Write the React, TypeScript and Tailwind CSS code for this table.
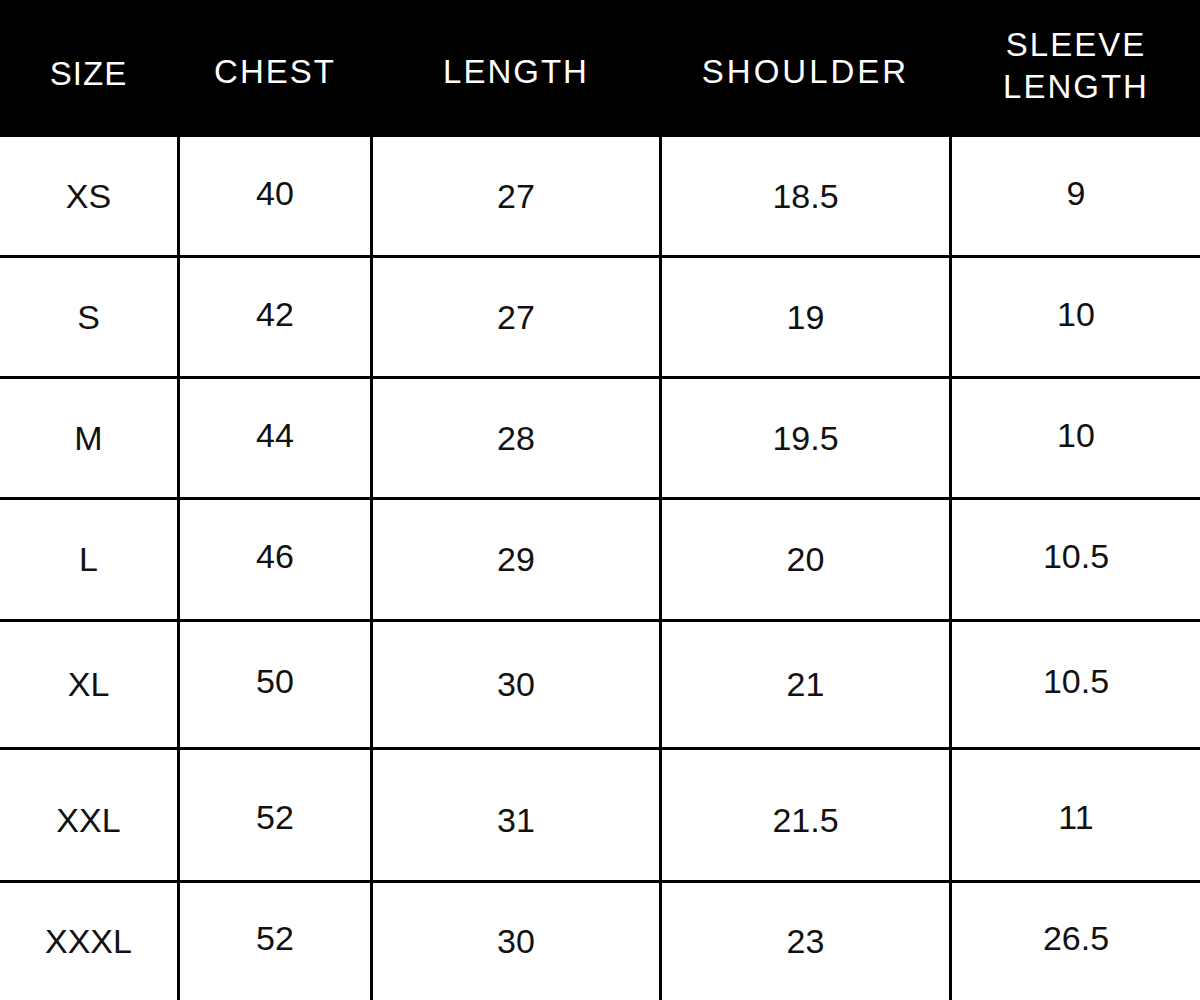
import React from "react";

const rows: string[][] = [
  ["XS", "40", "27", "18.5", "9"],
  ["S", "42", "27", "19", "10"],
  ["M", "44", "28", "19.5", "10"],
  ["L", "46", "29", "20", "10.5"],
  ["XL", "50", "30", "21", "10.5"],
  ["XXL", "52", "31", "21.5", "11"],
  ["XXXL", "52", "30", "23", "26.5"],
];

export default function App() {
  return (
    <div
      className="w-[1200px] h-[1000px] overflow-hidden bg-black grid grid-cols-[177px_190px_286px_287px_248px] grid-rows-[134px_118px_118px_118px_119px_125px_130px_117px] gap-[3px]"
      style={{ fontFamily: '"Liberation Sans", Arial, sans-serif' }}
    >
      <div className="bg-black text-white flex items-center justify-center pt-[14px] text-[33px] tracking-[1px]">SIZE</div>
      <div className="bg-black text-white flex items-center justify-center pt-[10px] text-[33px] tracking-[2px]">CHEST</div>
      <div className="bg-black text-white flex items-center justify-center pt-[10px] text-[33px] tracking-[2px]">LENGTH</div>
      <div className="bg-black text-white flex items-center justify-center pt-[10px] text-[33px] tracking-[3px]">SHOULDER</div>
      <div className="bg-black text-white flex flex-col items-center justify-center text-[33px] leading-[42px] tracking-[2px] pb-[3px]">
        <span>SLEEVE</span>
        <span>LENGTH</span>
      </div>
      {rows.map((r, ri) =>
        r.map((c, ci) => (
          <div
            key={ri + "-" + ci}
            className={
              "bg-white text-[#111] flex items-center justify-center text-[34px] " +
              (ci === 1 || ci === 4 ? "pb-[6px] " : "") +
              (ri === 5 ? "pt-[10px]" : "")
            }
          >
            {c}
          </div>
        ))
      )}
    </div>
  );
}
